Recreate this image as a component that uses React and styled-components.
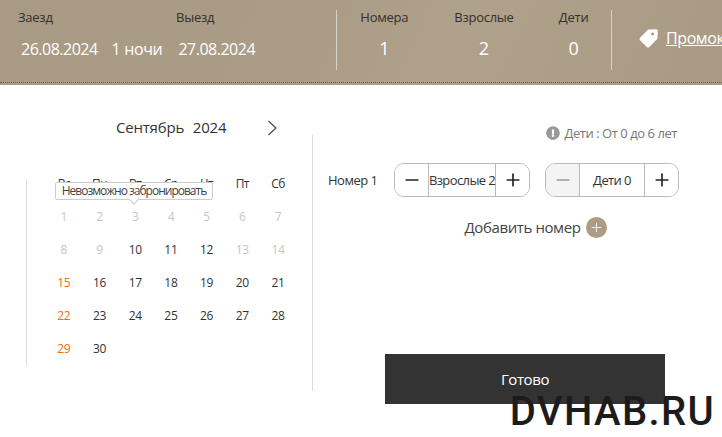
import styled, { createGlobalStyle } from "styled-components";
import { Minus, Plus } from "lucide-react";
import { FaExclamationCircle } from "react-icons/fa";

const GlobalStyle = createGlobalStyle`
  html, body {
    margin: 0;
    padding: 0;
    background: #fff;
    overflow: hidden;
  }
  body {
    font-family: "Open Sans", "Noto Sans", sans-serif;
    color: #333;
  }
  * { box-sizing: border-box; }
`;

const Page = styled.div`
  position: relative;
  width: 722px;
  height: 437px;
  overflow: hidden;
`;

const Header = styled.header`
  position: relative;
  display: flex;
  height: 85px;
  padding-top: 10px;
  background: linear-gradient(115deg, #a99a84 0%, #ab9c86 45%, #b0a18b 62%, #a99a83 100%);
  white-space: nowrap;
  overflow: hidden;

  &::after {
    content: "";
    position: absolute;
    left: 0;
    right: 0;
    bottom: 2px;
    border-bottom: 1px dotted #6e6353;
  }
`;

const DateGroup = styled.div`
  display: grid;
  grid-template-columns: 158px 160px;
  grid-template-rows: 15px auto;
  width: 337px;
  height: 60px;
  padding-left: 18px;
  border-right: 1px solid #d9d2c6;
`;

const Label = styled.div`
  font-size: 13px;
  line-height: 15px;
  letter-spacing: -0.25px;
  color: #33302b;
`;

const DateValues = styled.div`
  grid-column: 1 / 3;
  display: flex;
  margin-top: 13px;
  padding-left: 3px;
  font-size: 16px;
  line-height: 22px;
  letter-spacing: -0.5px;
  color: #fff;
`;

const Nights = styled.span`
  margin: 0 16px 0 14px;
  letter-spacing: -0.35px;
`;

const CountGroup = styled.div`
  display: flex;
  width: 275px;
  height: 60px;
  border-right: 1px solid #d9d2c6;
`;

const Count = styled.div`
  width: ${(p) => p.$width}px;
  display: flex;
  flex-direction: column;
  align-items: center;
  gap: 12px;
`;

const CountValue = styled.div`
  font-size: 18px;
  line-height: 22px;
  color: #fff;
`;

const Promo = styled.a`
  display: flex;
  align-items: center;
  gap: 7px;
  height: 56px;
  margin-left: 26px;
  font-size: 16px;
  letter-spacing: -0.4px;
  color: #fff;
  text-decoration: underline;
`;

const Body = styled.main`
  display: flex;
`;

const CalendarPanel = styled.section`
  width: 312px;
  flex: none;
`;

const MonthRow = styled.div`
  display: flex;
  align-items: center;
  height: 34px;
  margin-top: 25px;
  padding-left: 116px;
  font-size: 15px;
  letter-spacing: -0.2px;
  word-spacing: 5px;
  color: #333;
`;

const NextButton = styled.span`
  display: flex;
  margin: 2px 0 0 41px;
`;

const CalendarFrame = styled.div`
  position: relative;
  display: flow-root;
  height: 186px;
  margin: 36px 0 0 26px;
  border-left: 1px solid #ddd;
`;

const CalendarGrid = styled.div`
  display: grid;
  grid-template-columns: repeat(7, 35.7px);
  grid-auto-rows: 33px;
  margin-top: -13px;
  padding: 0 0 0 19px;
`;

const Weekday = styled.div`
  display: flex;
  align-items: center;
  justify-content: center;
  font-size: 12px;
  letter-spacing: -0.6px;
  color: #333;
`;

const Day = styled.div`
  display: flex;
  align-items: center;
  justify-content: center;
  font-size: 12px;
  letter-spacing: -0.3px;
  color: ${(p) => (p.$sunday ? "#ee6c12" : p.$disabled ? "#c6c6c6" : "#333")};
`;

const Tooltip = styled.div`
  position: absolute;
  left: 28px;
  top: 2px;
  width: 158px;
  height: 18px;
  border: 1px solid #ccc;
  border-radius: 2px;
  background: #fff;
  font-size: 12px;
  line-height: 15px;
  letter-spacing: -1px;
  text-align: center;
  color: #444;
  white-space: nowrap;

  &::after {
    content: "";
    position: absolute;
    left: 74px;
    bottom: -4px;
    width: 7px;
    height: 7px;
    background: #fff;
    border-right: 1px solid #ccc;
    border-bottom: 1px solid #ccc;
    transform: rotate(45deg);
  }
`;

const RoomPanel = styled.section`
  flex: 1;
  height: 256px;
  margin-top: 50px;
  border-left: 1px solid #ddd;
  display: flex;
  flex-direction: column;
`;

const Hint = styled.div`
  display: flex;
  align-items: center;
  justify-content: flex-end;
  gap: 4px;
  height: 16px;
  margin: -10px 45px 0 0;
  font-size: 13px;
  letter-spacing: -0.45px;
  color: #777;
`;

const RoomRow = styled.div`
  display: flex;
  align-items: center;
  margin-top: 22px;
  padding-left: 15px;
`;

const RoomName = styled.div`
  width: 66px;
  font-size: 13px;
  letter-spacing: -0.5px;
  color: #333;
`;

const Stepper = styled.div`
  display: flex;
  height: 34px;
  margin-right: 15px;
  border: 1px solid #bbb;
  border-radius: 10px;
  overflow: hidden;
`;

const StepButton = styled.button`
  display: flex;
  align-items: center;
  justify-content: center;
  width: 33px;
  padding: 0;
  border: 0;
  background: ${(p) => (p.disabled ? "#f4f4f4" : "#fff")};
  color: ${(p) => (p.disabled ? "#999" : "#222")};
`;

const StepValue = styled.div`
  display: flex;
  align-items: center;
  justify-content: center;
  width: ${(p) => p.$width}px;
  border-left: 1px solid #bbb;
  border-right: 1px solid #bbb;
  font-size: 13px;
  letter-spacing: -0.6px;
  color: #333;
  white-space: nowrap;
`;

const AddRoom = styled.div`
  display: flex;
  align-items: center;
  justify-content: center;
  gap: 5px;
  margin: 18px 0 0 36px;
  font-size: 15px;
  letter-spacing: -0.4px;
  color: #444;
`;

const AddIcon = styled.span`
  display: flex;
  align-items: center;
  justify-content: center;
  width: 21px;
  height: 21px;
  margin-top: 2px;
  border-radius: 50%;
  background: #ab9c86;
  color: #fff;
`;

const DoneButton = styled.button`
  width: 280px;
  height: 50px;
  flex: none;
  margin: 116px 0 0 72px;
  border: 0;
  background: #333;
  color: #fff;
  font-family: inherit;
  font-size: 15px;
  letter-spacing: -0.4px;
`;

const Watermark = styled.div`
  position: absolute;
  right: 7px;
  top: 388px;
  font-family: "Roboto", sans-serif;
  font-size: 40px;
  line-height: 47px;
  font-weight: 500;
  letter-spacing: 1.35px;
  color: #1c1c1c;
`;

const weekdays = ["Вс", "Пн", "Вт", "Ср", "Чт", "Пт", "Сб"];
const days = Array.from({ length: 30 }, (_, i) => i + 1);
const disabledDays = [1, 2, 3, 4, 5, 6, 7, 8, 9, 13, 14];
const sundays = [15, 22, 29];

function TagIcon() {
  return (
    <svg width="21" height="21" viewBox="0 0 21 21">
      <path
        fill="#fff"
        fillRule="evenodd"
        d="M11 1.5 18 1.2a1.8 1.8 0 0 1 1.8 1.8l-.3 7a2 2 0 0 1-.6 1.3l-7.6 7.6a1.8 1.8 0 0 1-2.5 0L2 12.2a1.8 1.8 0 0 1 0-2.5l7.7-7.6A2 2 0 0 1 11 1.5ZM14.6 4.4a1.5 1.5 0 1 0 .01 0Z"
      />
    </svg>
  );
}

function Chevron() {
  return (
    <svg width="11" height="16" viewBox="0 0 11 16">
      <path d="M1.5 1 9 8l-7.5 7" fill="none" stroke="#444" strokeWidth="1.2" />
    </svg>
  );
}

export default function App() {
  return (
    <Page>
      <GlobalStyle />
      <Header>
        <DateGroup>
          <Label>Заезд</Label>
          <Label>Выезд</Label>
          <DateValues>
            <span>26.08.2024</span>
            <Nights>1 ночи</Nights>
            <span>27.08.2024</span>
          </DateValues>
        </DateGroup>
        <CountGroup>
          <Count $width={95}>
            <Label>Номера</Label>
            <CountValue>1</CountValue>
          </Count>
          <Count $width={105}>
            <Label>Взрослые</Label>
            <CountValue>2</CountValue>
          </Count>
          <Count $width={75}>
            <Label>Дети</Label>
            <CountValue>0</CountValue>
          </Count>
        </CountGroup>
        <Promo>
          <TagIcon />
          Промокод
        </Promo>
      </Header>
      <Body>
        <CalendarPanel>
          <MonthRow>
            Сентябрь 2024
            <NextButton>
              <Chevron />
            </NextButton>
          </MonthRow>
          <CalendarFrame>
            <CalendarGrid>
              {weekdays.map((w) => (
                <Weekday key={w}>{w}</Weekday>
              ))}
              {days.map((d) => (
                <Day
                  key={d}
                  $disabled={disabledDays.includes(d)}
                  $sunday={sundays.includes(d)}
                >
                  {d}
                </Day>
              ))}
            </CalendarGrid>
            <Tooltip>Невозможно забронировать</Tooltip>
          </CalendarFrame>
        </CalendarPanel>
        <RoomPanel>
          <Hint>
            <FaExclamationCircle size={14} color="#999" />
            Дети : От 0 до 6 лет
          </Hint>
          <RoomRow>
            <RoomName>Номер 1</RoomName>
            <Stepper>
              <StepButton>
                <Minus size={20} strokeWidth={2} />
              </StepButton>
              <StepValue $width={68}>Взрослые 2</StepValue>
              <StepButton>
                <Plus size={20} strokeWidth={2} />
              </StepButton>
            </Stepper>
            <Stepper>
              <StepButton disabled>
                <Minus size={20} strokeWidth={2} />
              </StepButton>
              <StepValue $width={66}>Дети 0</StepValue>
              <StepButton>
                <Plus size={20} strokeWidth={2} />
              </StepButton>
            </Stepper>
          </RoomRow>
          <AddRoom>
            Добавить номер
            <AddIcon>
              <Plus size={15} strokeWidth={1.4} />
            </AddIcon>
          </AddRoom>
          <DoneButton>Готово</DoneButton>
        </RoomPanel>
      </Body>
      <Watermark>DVHAB.RU</Watermark>
    </Page>
  );
}
